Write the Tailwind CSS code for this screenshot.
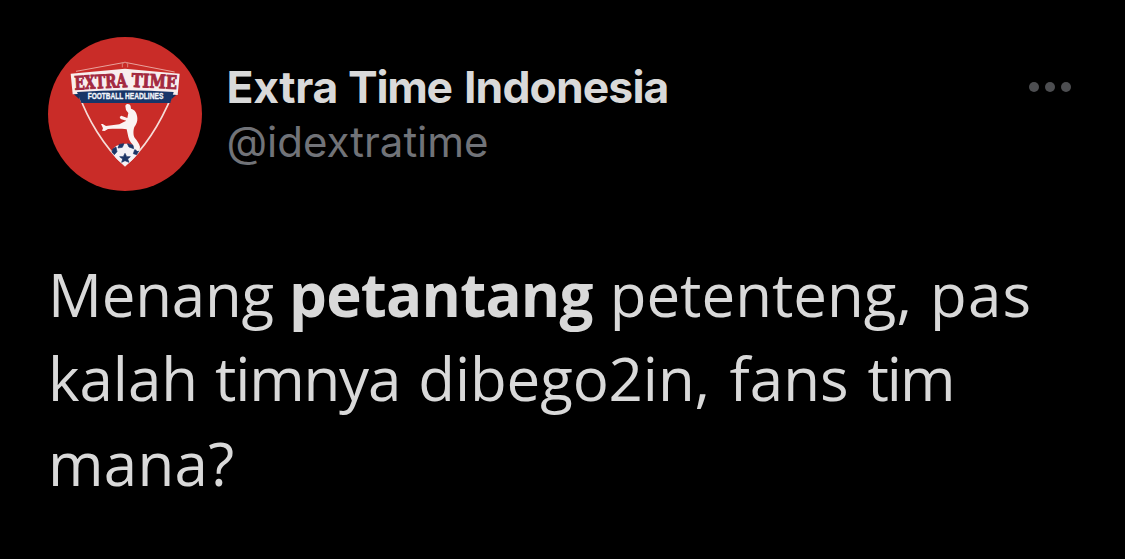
<!DOCTYPE html>
<html lang="id">
  <head>
    <meta charset="UTF-8" />
    <meta name="viewport" content="width=device-width, initial-scale=1.0" />
    <title>Extra Time Indonesia</title>
    <script src="https://cdn.jsdelivr.net/npm/@tailwindcss/browser@4"></script>
  </head>
  <body class="bg-black text-[#d9d9d9]">
    <article class="h-[559px] overflow-hidden pt-[37px] pl-12 pr-[54px]">

      <!-- Author row -->
      <header class="flex h-[154px] items-start">
        <svg class="size-[154px] shrink-0" viewBox="24 21 462 462" role="img" aria-label="Extra Time">
          <circle cx="255" cy="252" r="231" fill="#c92c28" />
          <!-- Shield -->
          <path d="M108 124 L255 97 L404 126" fill="none" stroke="#e9a29c" stroke-width="3" />
          <path d="M247 112 V101 L255 96 L263 101 V112" fill="none" stroke="#dc7f79" stroke-width="3" />
          <path d="M117 194 C142 264 190 350 255 407 C320 350 368 264 397 194" fill="none" stroke="#f6dcd8" stroke-width="5" />
          <!-- Banner -->
          <path d="M97 188 L118 188 L118 208 Z M416 188 L394 188 L394 208 Z" fill="#16305f" />
          <path d="M92 131 L255 116 L419 131 L413 195 L255 184 L98 193 Z" fill="#f8eeee" />
          <path d="M111 186 Q255 176 401 186 L391 219 H124 Z" fill="#173568" />
          <g fill="#a32940" stroke="#a32940" stroke-width="3" font-family="'DejaVu Serif', serif" font-weight="700" font-size="56">
            <text transform="rotate(-3 104 179)" x="104" y="179" textLength="158" lengthAdjust="spacingAndGlyphs">EXTRA</text>
            <text transform="rotate(3 274 170)" x="274" y="170" textLength="136" lengthAdjust="spacingAndGlyphs">TIME</text>
          </g>
          <g fill="#f3f5fa" stroke="#f3f5fa" stroke-width="1" font-family="'Liberation Sans', sans-serif" font-weight="700" font-size="27">
            <text x="143" y="208" textLength="107" lengthAdjust="spacingAndGlyphs">FOOTBALL</text>
            <text x="255" y="208" textLength="115" lengthAdjust="spacingAndGlyphs">HEADLINES</text>
          </g>
          <!-- Ball -->
          <path d="M216 366 C220 335 288 332 297 364 C292 378 270 398 255 407 C240 397 222 381 216 366 Z" fill="#f4f2f6" />
          <path d="M238 343 L252 341 L247 352 L234 354 Z M262 341 L279 345 L281 356 L267 351 Z M218 357 L228 351 L231 365 L223 374 L216 366 Z M284 359 L296 363 L290 374 L280 371 Z M255 370 L260 380 L271 380 L263 387 L267 397 L255 392 L245 397 L248 387 L239 380 L250 380 Z" fill="#1c3566" stroke="#1c3566" stroke-width="2" />
          <!-- Player -->
          <path d="M256 228 C258 220 270 220 272 229 L273 236 C285 239 291 249 292 264 C293 275 289 283 283 291 C279 302 280 317 284 323 C292 332 297 340 300 350 L299 361 L291 364 L287 353 C276 342 267 333 265 321 L260 298 C247 296 226 296 204 297 L194 303 L186 302 L189 295 L183 282 L188 282 L198 288 L238 283 L251 276 L259 272 L242 267 L239 261 L244 257 L262 264 L265 249 L258 240 Z" fill="#fbf3f2" />
        </svg>

        <div class="ml-[24.5px] pt-[25px] font-['Inter',sans-serif]">
          <h1 class="flex h-[54px] text-[44.5px] leading-[51px] font-bold">
            <span class="w-[121.5px] tracking-[-0.3px]">Extra</span>
            <span class="w-[116px] tracking-[-1.3px]">Time</span>
            <span class="tracking-[-0.9px]">Indonesia</span>
          </h1>
          <p class="text-[42px] leading-[51px] text-[#717378]">@idextratime</p>
        </div>

        <!-- More menu -->
        <div class="mt-[45px] ml-auto flex gap-1.5">
          <span class="size-2.5 rounded-full bg-[#4d4e51]"></span>
          <span class="size-2.5 rounded-full bg-[#4d4e51]"></span>
          <span class="size-2.5 rounded-full bg-[#4d4e51]"></span>
        </div>
      </header>

      <!-- Tweet text -->
      <div class="mt-[60.5px] font-['Open_Sans',sans-serif] text-[60px] leading-[84.5px] whitespace-nowrap">
        <p class="flex">
          <span class="w-[241px] tracking-[-0.2px]">Menang</span>
          <b class="w-[320.7px] tracking-[-0.8px]">petantang</b>
          <span class="w-[320.3px]">petenteng,</span>
          <span class="tracking-[1.2px]">pas</span>
        </p>
        <p class="flex">
          <span class="w-[167px]">kalah</span>
          <span class="w-[203.3px] tracking-[-1.2px]">timnya</span>
          <span class="w-[311.2px] tracking-[-0.1px]">dibego2in,</span>
          <span class="w-[138px] tracking-[0.1px]">fans</span>
          <span class="tracking-[-2px]">tim</span>
        </p>
        <p class="tracking-[0.3px]">mana?</p>
      </div>
    </article>
  </body>
</html>
